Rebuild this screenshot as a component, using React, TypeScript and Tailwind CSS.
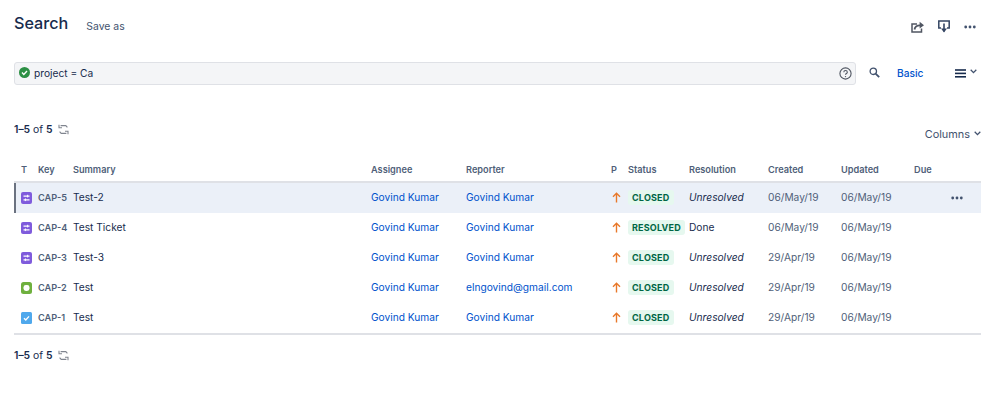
import React from "react";

const cols = "grid grid-cols-[7px_17px_35px_298px_95px_145px_17px_61px_79px_73px_73px_1fr] items-center";

type Issue = {
  type: "improve" | "story" | "task";
  key: string;
  summary: string;
  reporter: string;
  status: string;
  resolution: string;
  created: string;
};

const issues: Issue[] = [
  { type: "improve", key: "CAP-5", summary: "Test-2", reporter: "Govind Kumar", status: "CLOSED", resolution: "Unresolved", created: "06/May/19" },
  { type: "improve", key: "CAP-4", summary: "Test Ticket", reporter: "Govind Kumar", status: "RESOLVED", resolution: "Done", created: "06/May/19" },
  { type: "improve", key: "CAP-3", summary: "Test-3", reporter: "Govind Kumar", status: "CLOSED", resolution: "Unresolved", created: "29/Apr/19" },
  { type: "story", key: "CAP-2", summary: "Test", reporter: "elngovind@gmail.com", status: "CLOSED", resolution: "Unresolved", created: "29/Apr/19" },
  { type: "task", key: "CAP-1", summary: "Test", reporter: "Govind Kumar", status: "CLOSED", resolution: "Unresolved", created: "29/Apr/19" },
];

const TypeIcon = ({ type }: { type: Issue["type"] }) => {
  if (type === "improve") {
    return (
      <svg width="11" height="12" viewBox="0 0 11 12">
        <rect width="11" height="12" rx="2" fill="#7f5bdc" />
        <path d="M2.5 4.2h6M2.5 7.8h6" stroke="#fff" strokeWidth="1.2" />
        <path d="M6.6 2.8v2.6M4.4 6.5v2.6" stroke="#fff" strokeWidth="1" />
      </svg>
    );
  }
  if (type === "story") {
    return (
      <svg width="11" height="12" viewBox="0 0 11 12">
        <rect width="11" height="12" rx="2.5" fill="#6fb03e" />
        <rect x="2.5" y="3" width="6" height="6" rx="2.4" fill="#fff" />
      </svg>
    );
  }
  return (
    <svg width="11" height="12" viewBox="0 0 11 12">
      <rect width="11" height="12" rx="1.5" fill="#4fa8ec" />
      <path d="M3 6.2l1.8 1.8 3.2-3.6" fill="none" stroke="#fff" strokeWidth="1.4" />
    </svg>
  );
};

const RefreshIcon = () => (
  <svg width="11" height="11" viewBox="0 0 11 11" fill="none" stroke="#80858f" strokeWidth="1.1">
    <path d="M1 .8v3h3" />
    <path d="M2.6 1.6h5.2l1.6 1.8" />
    <path d="M10 10.2v-3H7" />
    <path d="M8.4 9.4H3.2L1.6 7.6" />
  </svg>
);

const Pager = () => (
  <div className="flex items-center gap-[5px] text-[10.4px] leading-[14px] text-[#172b4d]">
    <span>
      <b className="font-semibold">1–5</b> of <b className="font-semibold">5</b>
    </span>
    <span className="mb-[2px]">
      <RefreshIcon />
    </span>
  </div>
);

const Chevron = () => (
  <svg width="7" height="5" viewBox="0 0 7 5" fill="none" stroke="#42526e" strokeWidth="1.3">
    <path d="M.7.8l2.8 2.8L6.3.8" />
  </svg>
);

const Dots = () => (
  <svg width="12" height="4" viewBox="0 0 12 4" fill="#42526e">
    <circle cx="1.7" cy="2" r="1.4" />
    <circle cx="6" cy="2" r="1.4" />
    <circle cx="10.3" cy="2" r="1.4" />
  </svg>
);

const Row = ({ issue, active }: { issue: Issue; active: boolean }) => (
  <div className={`${cols} h-[30px] text-[10.2px] ${active ? "bg-[#ebf0f8] shadow-[inset_2px_0_0_#6b7280]" : ""}`}>
    <span />
    <span className="flex pl-[1px] -ml-[1px]">
      <TypeIcon type={issue.type} />
    </span>
    <span className="text-[9.2px] font-semibold text-[#505f79] whitespace-nowrap">{issue.key}</span>
    <span className="text-[#172b4d]">{issue.summary}</span>
    <span className="text-[#0052cc]">Govind Kumar</span>
    <span className="text-[#0052cc]">{issue.reporter}</span>
    <span className="mb-[2px] flex pl-[1px]">
      <svg width="9" height="11" viewBox="0 0 9 11" fill="none" stroke="#e8782a" strokeWidth="1.4">
        <path d="M4.5 10.5V1.5M1 4.8l3.5-3.5L8 4.8" />
      </svg>
    </span>
    <span className="mb-[2px] flex">
      <span className="rounded-[3px] bg-[#e6f8ef] px-[4px] text-[9px] leading-[15px] font-bold tracking-[0.2px] text-[#006644] whitespace-nowrap">
        {issue.status}
      </span>
    </span>
    <span className={issue.resolution === "Done" ? "text-[#172b4d]" : "italic text-[#172b4d]"}>{issue.resolution}</span>
    <span className="text-[#505f79]">{issue.created}</span>
    <span className="text-[#505f79]">06/May/19</span>
    <span className="flex justify-end pr-[18px]">{active && <Dots />}</span>
  </div>
);

export default function App() {
  return (
    <div className="h-[404px] w-[999px] overflow-hidden bg-white pl-[14px] pr-[18px] font-['Inter',sans-serif]">
      <div className="flex h-[62px] items-start justify-between pt-[11px]">
        <div className="flex items-center gap-[18px]">
          <h1 className="text-[16.2px] leading-[24px] font-medium text-[#172b4d]">Search</h1>
          <span className="mt-[7px] text-[10.4px] text-[#42526e]">Save as</span>
        </div>
        <div className="flex items-center gap-[14px] pt-[9px] pr-[5px]">
          <svg width="13" height="12" viewBox="0 0 13 12" fill="none" stroke="#505662" strokeWidth="1.5">
            <path d="M6 3H1v8h9.5V7.5" />
            <path d="M3.5 8.5c.4-2.6 2.4-4.2 5.5-4.2" strokeWidth="1.8" />
            <path d="M8.6 .8L13 4.2 8.6 7.6z" fill="#505662" stroke="none" />
          </svg>
          <svg width="12" height="13" viewBox="0 0 12 13" fill="none" stroke="#344563" strokeWidth="1.4">
            <path d="M3 8H.8V1h10.4v7H9" strokeWidth="1.5" />
            <path d="M6 3.5v8" strokeWidth="1.6" />
            <path d="M3 8.5h6L6 12.5z" fill="#344563" stroke="none" />
          </svg>
          <Dots />
        </div>
      </div>

      <div className="flex h-[23px] items-center">
        <div className="flex h-[23px] w-[842px] items-center gap-[4px] rounded-[3px] border border-[#dfe1e6] bg-[#f4f5f7] pr-[3px] pl-[4px] text-[10.2px] text-[#172b4d]">
          <svg width="11" height="11" viewBox="0 0 11 11" className="mb-[2px]">
            <circle cx="5.5" cy="5.5" r="5.5" fill="#2c8f44" />
            <path d="M3 5.6l1.8 1.8L8 4" fill="none" stroke="#fff" strokeWidth="1.4" />
          </svg>
          <span className="flex-1">project = Ca</span>
          <svg width="13" height="13" viewBox="0 0 13 13" fill="none" stroke="#505662">
            <circle cx="6.5" cy="6.5" r="5.6" strokeWidth="1.1" />
            <path d="M4.8 5.2c0-2.2 3.5-2.2 3.5 0 0 1.3-1.8 1.3-1.8 2.6" strokeWidth="1.1" />
            <circle cx="6.5" cy="9.6" r=".7" fill="#505662" stroke="none" />
          </svg>
        </div>
        <svg width="11" height="11" viewBox="0 0 11 11" fill="none" stroke="#42526e" className="mb-[2px] ml-[13px]" strokeWidth="1.3">
          <circle cx="4.3" cy="4.3" r="3.2" />
          <path d="M6.8 6.8l3.4 3.4" strokeWidth="1.8" />
        </svg>
        <span className="ml-[17px] text-[10.2px] font-medium text-[#0052cc]">Basic</span>
        <div className="ml-[32px] flex items-start gap-[4px]">
          <svg width="11" height="9" viewBox="0 0 11 9" fill="#172b4d">
            <rect width="11" height="1.6" y=".2" />
            <rect width="11" height="1.6" y="3.6" />
            <rect width="11" height="1.6" y="7" />
          </svg>
          <Chevron />
        </div>
      </div>

      <div className="flex h-[52px] items-end justify-between">
        <Pager />
        <div className="mb-[-5px] flex items-center gap-[4px] text-[10.9px] text-[#42526e]">
          Columns <Chevron />
        </div>
      </div>

      <div className={`${cols} mt-[22px] h-[24px] w-[967px] border-b-2 border-[#dfe1e6] text-[9.2px] font-semibold text-[#505f79]`}>
        <span />
        <span>T</span>
        <span>Key</span>
        <span>Summary</span>
        <span>Assignee</span>
        <span>Reporter</span>
        <span>P</span>
        <span>Status</span>
        <span>Resolution</span>
        <span>Created</span>
        <span>Updated</span>
        <span>Due</span>
      </div>

      <div className="w-[967px] border-b-2 border-[#dfe1e6]">
        {issues.map((issue, i) => (
          <Row key={issue.key} issue={issue} active={i === 0} />
        ))}
      </div>

      <div className="mt-[14px]">
        <Pager />
      </div>
    </div>
  );
}
